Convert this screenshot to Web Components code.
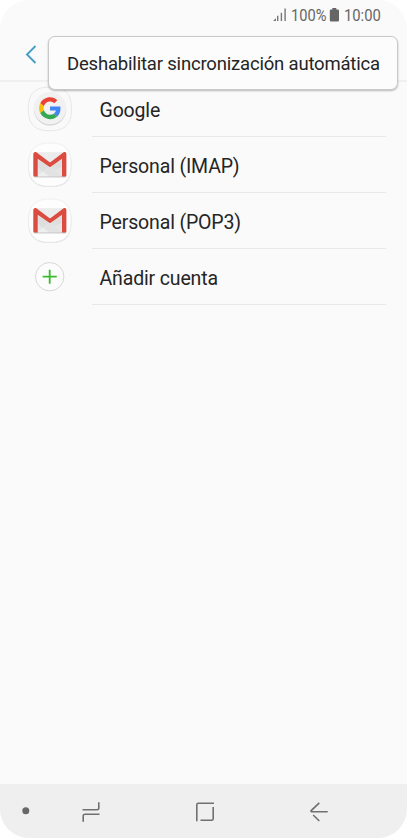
<!DOCTYPE html>
<html lang="es">
<head>
<meta charset="utf-8">
<title>Cuentas</title>
<style>
html,body{margin:0;background:#fff}
body{font-family:Roboto,"Liberation Sans",sans-serif;color:#252525}
</style>
</head>
<body>
<phone-screen>
  <status-bar slot="status"></status-bar>
  <title-bar slot="header"><popup-menu>Deshabilitar sincronización automática</popup-menu></title-bar>
  <account-row><google-icon slot="icon"></google-icon>Google</account-row>
  <account-row><mail-icon slot="icon"></mail-icon>Personal (IMAP)</account-row>
  <account-row><mail-icon slot="icon"></mail-icon>Personal (POP3)</account-row>
  <account-row><add-icon slot="icon"></add-icon>Añadir cuenta</account-row>
  <nav-bar slot="nav"></nav-bar>
</phone-screen>
<script>
function define(name, html) {
  const template = document.createElement('template');
  template.innerHTML = html;
  customElements.define(name, class extends HTMLElement {
    constructor() {
      super();
      this.attachShadow({mode: 'open'}).append(template.content.cloneNode(true));
    }
  });
}

define('phone-screen', `
<style>
:host{display:flex;flex-direction:column;width:407px;height:838px;background:#fafafa;border-radius:29px;overflow:hidden}
main{flex:1;margin-top:-1px}
</style>
<slot name="status"></slot><slot name="header"></slot><main><slot></slot></main><slot name="nav"></slot>`);

define('status-bar', `
<style>
:host{display:flex;box-sizing:border-box;height:29px;padding:0 26px 0 0;justify-content:flex-end;align-items:center;color:#666;font-size:17px;line-height:28px}
svg{display:block}
span{display:block;transform-origin:0 50%;white-space:nowrap}
.level{width:35px;transform:scaleX(.86)}
.time{width:37px;transform:scaleX(.87)}
.signal{margin-right:4px}
.battery{margin:0 4px 0 3px}
</style>
<svg class="signal" width="15" height="14" viewBox="0 0 15 14" fill="#777"><path d="M1 13 4 10.2V13ZM5 7.8H6.4V13H5ZM8.7 4.7H10.1V13H8.7ZM12.4 .5H13.8V13H12.4Z"/></svg>
<span class="level">100%</span>
<svg class="battery" width="11" height="14" viewBox="0 0 11 14"><path fill="#666" d="M3.3 0H7.3V1.4H8.8Q10 1.4 10 2.6V12.2Q10 13.4 8.8 13.4H2Q.8 13.4.8 12.2V2.6Q.8 1.4 2 1.4H3.3Z"/></svg>
<span class="time">10:00</span>`);

define('title-bar', `
<style>
:host{display:flex;box-sizing:border-box;height:53px;border-bottom:2px solid #f0f0f0;padding:15px 0 0 25px;position:relative}
svg{display:block}
</style>
<svg width="13" height="20" viewBox="0 0 13 20"><path d="M10.5 2 2 10.5 10.5 19" fill="none" stroke="#459fc5" stroke-width="1.9"/></svg>
<slot></slot>`);

define('popup-menu', `
<style>
:host{position:absolute;left:48px;top:7px;z-index:2;box-sizing:border-box;width:350px;height:54px;border:1px solid #c9c9c9;border-radius:7px;background:#fcfcfc;box-shadow:0 1px 2px #0004;padding-left:18px;font-size:18.5px;letter-spacing:-.185px;line-height:55px;white-space:nowrap}
</style>
<slot></slot>`);

define('account-row', `
<style>
:host{display:grid;grid-template:56px / 92px 294px;height:56px}
.icon{display:grid;place-items:center;padding:0 0 0 7px}
.label{box-sizing:border-box;border-bottom:1px solid #e8e8e8;padding:2px 0 0 7.5px;font-size:19.5px;letter-spacing:-.15px;line-height:55px;height:56px;white-space:nowrap}
</style>
<div class="icon"><slot name="icon"></slot></div><div class="label"><slot></slot></div>`);

define('google-icon', `
<style>:host{display:block}svg{display:block}</style>
<svg width="46" height="48" viewBox="0 0 46 48">
<path d="M23 2C38 2 44.5 8.5 44.5 24S38 45.8 23 45.8 1.3 39.5 1.3 24 8 2 23 2Z" fill="#f9f9f9" stroke="#e7e7e7"/>
<circle cx="23" cy="24.2" r="16.2" fill="#ccc"/><circle cx="23" cy="23.3" r="16.2" fill="#f1f1f1"/>
<g transform="translate(12.1 12.3) scale(.455)">
<path fill="#ea4335" d="M24 9.5c3.54 0 6.71 1.22 9.21 3.6l6.85-6.85C35.9 2.38 30.47 0 24 0 14.62 0 6.51 5.38 2.56 13.22l7.98 6.19C12.43 13.72 17.74 9.5 24 9.5z"/>
<path fill="#4285f4" d="M46.98 24.55c0-1.57-.15-3.09-.38-4.55H24v9.02h12.94c-.58 2.96-2.26 5.48-4.78 7.18l7.73 6c4.51-4.18 7.09-10.36 7.09-17.65z"/>
<path fill="#fbbc05" d="M10.53 28.59c-.48-1.45-.76-2.99-.76-4.59s.27-3.14.76-4.59l-7.98-6.19C.92 16.46 0 20.12 0 24c0 3.88.92 7.54 2.56 10.78l7.97-6.19z"/>
<path fill="#34a853" d="M24 48c6.48 0 11.93-2.13 15.89-5.81l-7.73-6c-2.15 1.45-4.92 2.3-8.16 2.3-6.26 0-11.57-4.22-13.47-9.91l-7.98 6.19C6.51 42.62 14.62 48 24 48z"/></g></svg>`);

define('mail-icon', `
<style>:host{display:block}svg{display:block}</style>
<svg width="46" height="48" viewBox="0 0 46 48">
<path d="M23 2.5C38 2.5 44.5 8.5 44.5 24.5S38 46.1 23 46.1 1.3 40 1.3 24.5 8 2.5 23 2.5Z" fill="#ddd"/>
<path d="M23 2C38 2 44.2 8.5 44.2 23.7S38 45.2 23 45.2 1.6 39 1.6 23.7 8 2 23 2Z" fill="#fdfdfd" stroke="#ebebeb" stroke-width=".7"/>
<path d="M8 11.5H38V36H8Z" fill="#e5e5e5"/><path d="M10 35.5 23 24.5 37 35.5Z" fill="#efefef"/><path d="M9 17 23 27 37 17V25L28 29 37 36H23L10 26Z" fill="#d8d8d8" opacity=".6"/>
<path d="M9 11.5H37L23 21.7Z" fill="#ececec"/>
<path d="M6.3 13Q6.3 11 8.3 11H9L23 21.5 37 11H37.7Q39.4 11 39.4 13V34.2Q39.4 35.7 38 35.7H35V17.7L23 26.3 10.7 17.7V35.7H7.7Q6.3 35.7 6.3 34.2Z" fill="#db4b3f"/>
<path d="M7 36H38.7" stroke="#b9b9b9" stroke-width=".7"/></svg>`);

define('add-icon', `
<style>:host{display:block}svg{display:block}</style>
<svg width="32" height="32" viewBox="0 0 32 32"><circle cx="15.7" cy="15.7" r="14.2" fill="#fcfcfc" stroke="#d7d7d7"/><path d="M15.7 8.7V22.7M8.7 15.7H22.7" stroke="#36bd27" stroke-width="1.8"/></svg>`);

define('nav-bar', `
<style>
:host{display:grid;box-sizing:border-box;grid-template-columns:51px 80px 147px 82px;height:54px;padding-top:2px;background:#efefef;align-items:center;justify-items:center}
svg{display:block}path{fill:none;stroke:#707070;stroke-width:1.6}
.dot{margin-bottom:2px}
.home{margin-left:1px}
</style>
<svg class="dot" width="8" height="8" viewBox="0 0 8 8"><circle cx="3.8" cy="3.8" r="3.5" fill="#686868"/></svg>
<svg width="20" height="22" viewBox="0 0 20 22"><path d="M1.5 8.7H16Q17.8 8.7 17.8 7V1.2M18.5 13.2H4Q2.2 13.2 2.2 15V20.7"/></svg>
<svg class="home" width="20" height="22" viewBox="0 0 20 22"><path d="M1.8 20.2V3.7Q1.8 2.2 3.3 2.2H19M18.2 6V17.8Q18.2 19.3 16.7 19.3H5.5"/></svg>
<svg width="20" height="22" viewBox="0 0 20 22"><path d="M10.3 1.8 2.2 9.6Q1.5 10.8 2.7 10.8H18.7M4.2 14 10.3 20"/></svg>`);
</script>
</body>
</html>
